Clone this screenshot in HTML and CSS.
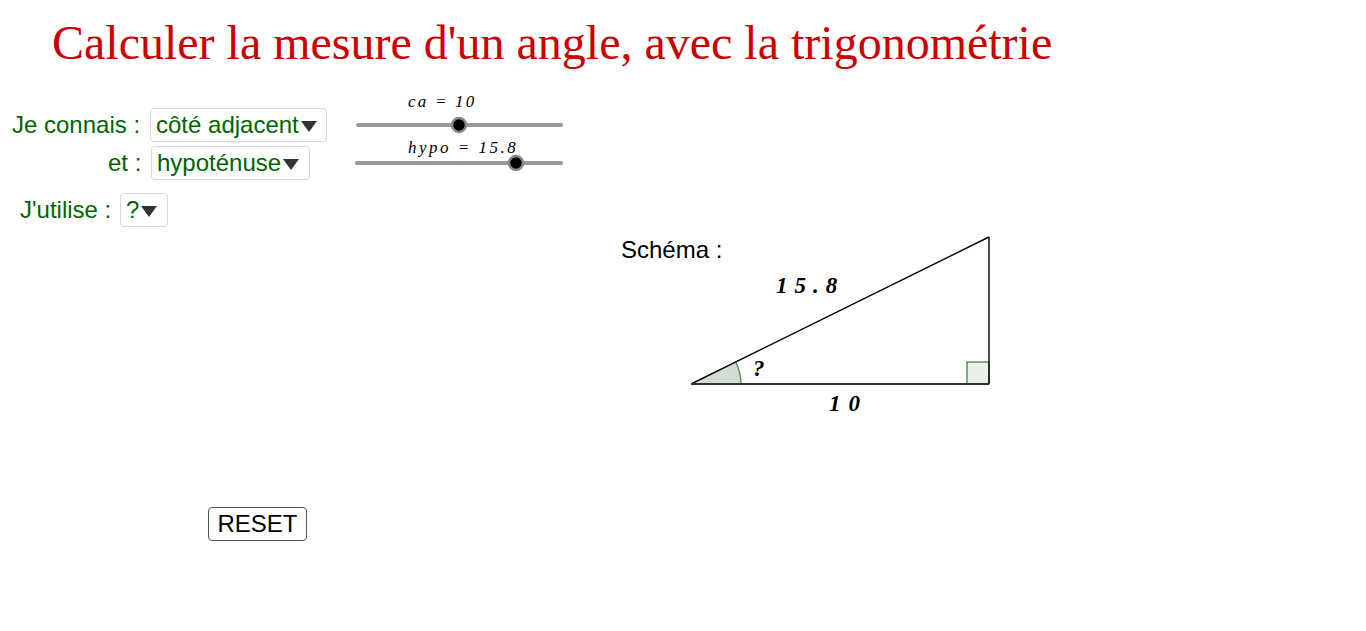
FILE: index.html
```html
<!DOCTYPE html>
<html lang="fr">
<head>
<meta charset="utf-8">
<title>Calculer la mesure d'un angle</title>
<link rel="stylesheet" href="styles.css">
</head>
<body>
<div class="applet">
  <h1 class="title">Calculer la mesure d'un angle, avec la trigonométrie</h1>
  <div class="controls">
    <div class="row row1">
      <span class="lbl">Je connais :</span>
      <span class="sel sel1">côté adjacent<span class="caret"></span></span>
    </div>
    <div class="row row2">
      <span class="lbl">et :</span>
      <span class="sel sel2">hypoténuse<span class="caret"></span></span>
    </div>
    <div class="row row3">
      <span class="lbl">J'utilise :</span>
      <span class="sel sel3">?<span class="caret"></span></span>
    </div>
  </div>

  <svg class="sliders" width="240" height="100" viewBox="340 85 240 100">
    <text class="slabel" x="408" y="107">ca = 10</text>
    <line class="track" x1="358" y1="125" x2="561" y2="125"/>
    <circle class="knob" cx="459" cy="125" r="7"/>
    <text class="slabel wide" x="408" y="153">hypo = 15.8</text>
    <line class="track" x1="357" y1="163" x2="561" y2="163"/>
    <circle class="knob" cx="516" cy="163" r="7"/>
  </svg>

  <div class="schema-label">Schéma :</div>

  <svg class="diagram" width="360" height="200" viewBox="660 225 360 200">
    <path class="angle" d="M691 384 L741 384 A50 50 0 0 0 735.8 361.9 Z"/>
    <path class="arc" d="M741 384 A50 50 0 0 0 735.8 361.9"/>
    <rect class="right" x="967" y="362" width="22" height="22"/>
    <line class="side" x1="691" y1="384" x2="989" y2="237"/>
    <line class="side" x1="989" y1="237" x2="989" y2="384"/>
    <line class="side base" x1="691" y1="384" x2="989" y2="384"/>
    <text class="dlabel hyp" x="776" y="293">15.8</text>
    <text class="dlabel adj" x="829" y="411">10</text>
    <text class="dlabel q" x="753" y="376">?</text>
  </svg>

  <button class="reset" type="button">RESET</button>
</div>
</body>
</html>
```

FILE: styles.css
```css
html, body {
  margin: 0;
  padding: 0;
  background: #ffffff;
}

.applet {
  position: relative;
  width: 1366px;
  height: 631px;
  overflow: hidden;
  font-family: "Liberation Sans", Arial, sans-serif;
}

.title {
  margin: 0;
  padding: 15px 0 0 52px;
  font-family: "Liberation Serif", "Times New Roman", serif;
  font-weight: normal;
  font-size: 48px;
  line-height: 56px;
  color: #cc0000;
  white-space: nowrap;
}

.controls {
  display: flex;
  flex-direction: column;
  padding-top: 37px;
}

.row {
  display: flex;
  align-items: center;
  height: 34px;
  color: #006400;
  font-size: 24px;
}

.row1 { padding-left: 12px; }
.row2 { padding-left: 108px; margin-top: 4px; }
.row3 { padding-left: 20px; margin-top: 13px; }

.lbl {
  white-space: pre;
}

.row1 .lbl { width: 138px; }
.row2 .lbl { width: 43px; }
.row3 .lbl { width: 100px; }

.sel {
  display: flex;
  align-items: center;
  box-sizing: border-box;
  height: 34px;
  padding: 0 4px 0 5px;
  border: 1px solid #d6d6d6;
  border-radius: 4px;
  color: #006400;
  white-space: nowrap;
}

.sel1 { width: 177px; }
.sel2 { width: 159px; }
.sel3 { width: 48px; }

.caret {
  display: inline-block;
  width: 0;
  height: 0;
  margin-left: 2px;
  margin-top: 2px;
  border-left: 8px solid transparent;
  border-right: 8px solid transparent;
  border-top: 11px solid #333333;
}

.sliders {
  position: absolute;
  left: 340px;
  top: 85px;
}

.track {
  stroke: #999999;
  stroke-width: 4;
  stroke-linecap: round;
}

.knob {
  fill: #000000;
  stroke: #888888;
  stroke-width: 2.5;
}

.slabel {
  font-family: "Liberation Serif", "Times New Roman", serif;
  font-style: italic;
  font-size: 17px;
  letter-spacing: 2.2px;
  fill: #000000;
}

.slabel.wide {
  letter-spacing: 2.5px;
}

.schema-label {
  position: absolute;
  left: 621px;
  top: 236px;
  font-size: 24px;
  color: #000000;
}

.diagram {
  position: absolute;
  left: 660px;
  top: 225px;
}

.angle {
  fill: #d2dcd2;
}

.arc {
  fill: none;
  stroke: #3b8a3b;
  stroke-width: 1.2;
}

.right {
  fill: #e9f1e9;
  stroke: #2e7d32;
  stroke-width: 1.2;
}

.side {
  stroke: #000000;
  stroke-width: 1.4;
}

.base {
  stroke: #333333;
  stroke-width: 2;
}

.dlabel {
  font-family: "Liberation Serif", "Times New Roman", serif;
  font-style: italic;
  font-weight: bold;
  font-size: 23px;
  letter-spacing: 7px;
  fill: #000000;
}

.dlabel.adj {
  letter-spacing: 8px;
}

.reset {
  position: absolute;
  left: 208px;
  top: 507px;
  width: 99px;
  height: 34px;
  padding: 0;
  box-sizing: border-box;
  background: #ffffff;
  border: 1px solid #555555;
  border-radius: 4px;
  font-family: "Liberation Sans", Arial, sans-serif;
  font-size: 24px;
  color: #000000;
}
```
